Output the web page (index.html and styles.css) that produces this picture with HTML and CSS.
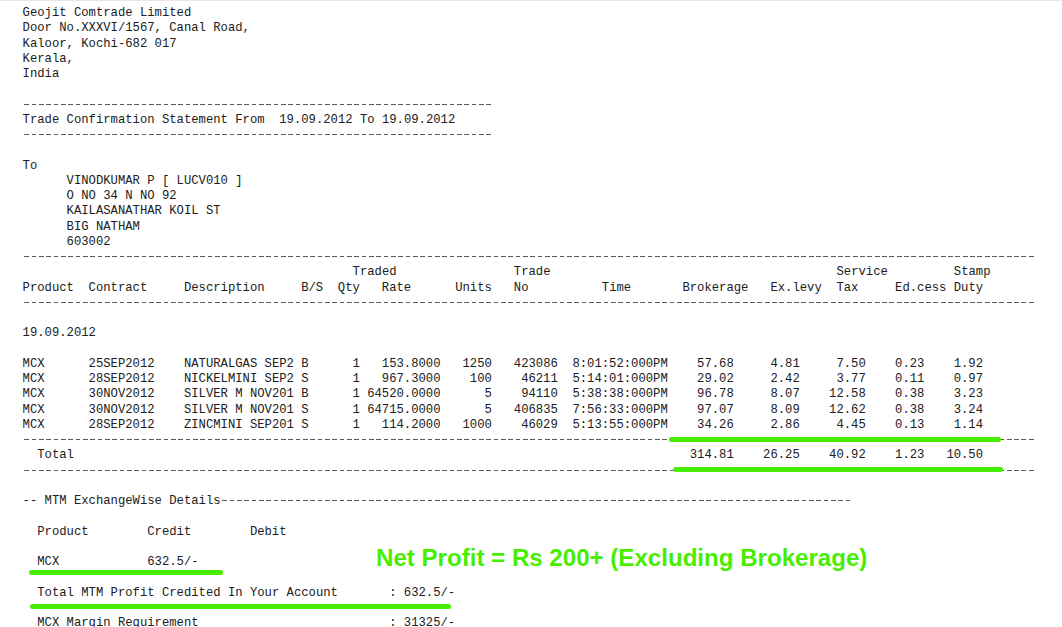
FILE: index.html
```html
<!DOCTYPE html>
<html lang="en">
<head>
<meta charset="utf-8">
<title>Trade Confirmation Statement</title>
<link rel="stylesheet" href="styles.css">
</head>
<body>
<div class="page">
  <section class="letterhead">
    <div class="ln">Geojit Comtrade Limited</div>
    <div class="ln">Door No.XXXVI/1567, Canal Road,</div>
    <div class="ln">Kaloor, Kochi-682 017</div>
    <div class="ln">Kerala,</div>
    <div class="ln">India</div>
    <div class="ln"></div>
  </section>

  <div class="rule rule-64"></div>
  <div class="ln">Trade Confirmation Statement From  19.09.2012 To 19.09.2012</div>
  <div class="rule rule-64"></div>
  <div class="ln"></div>

  <section class="recipient">
    <div class="ln">To</div>
    <div class="addr">
      <div class="ln">VINODKUMAR P [ LUCV010 ]</div>
      <div class="ln">O NO 34 N NO 92</div>
      <div class="ln">KAILASANATHAR KOIL ST</div>
      <div class="ln">BIG NATHAM</div>
      <div class="ln">603002</div>
    </div>
  </section>

  <section class="trades">
    <div class="rule rule-138"></div>
    <div class="thead-top">
      <span>Traded</span><span>Trade</span><span>Service</span><span>Stamp</span>
    </div>
    <div class="thead">
      <span>Product</span><span>Contract</span><span>Description</span><span>B/S</span><span>Qty</span><span>Rate</span><span>Units</span><span>No</span><span>Time</span><span>Brokerage</span><span>Ex.levy</span><span>Tax</span><span>Ed.cess</span><span>Duty</span>
    </div>
    <div class="rule rule-138"></div>
    <div class="ln"></div>
    <div class="ln">19.09.2012</div>
    <div class="ln"></div>

    <div class="trow">
      <span>MCX</span><span>25SEP2012</span><span>NATURALGAS SEP2</span><span>B</span><span class="r">1</span><span class="r">153.8000</span><span class="r">1250</span><span class="r">423086</span><span class="r">8:01:52:000PM</span><span class="r">57.68</span><span class="r">4.81</span><span class="r">7.50</span><span class="r">0.23</span><span class="r">1.92</span>
    </div>
    <div class="trow">
      <span>MCX</span><span>28SEP2012</span><span>NICKELMINI SEP2</span><span>S</span><span class="r">1</span><span class="r">967.3000</span><span class="r">100</span><span class="r">46211</span><span class="r">5:14:01:000PM</span><span class="r">29.02</span><span class="r">2.42</span><span class="r">3.77</span><span class="r">0.11</span><span class="r">0.97</span>
    </div>
    <div class="trow">
      <span>MCX</span><span>30NOV2012</span><span>SILVER M NOV201</span><span>B</span><span class="r">1</span><span class="r">64520.0000</span><span class="r">5</span><span class="r">94110</span><span class="r">5:38:38:000PM</span><span class="r">96.78</span><span class="r">8.07</span><span class="r">12.58</span><span class="r">0.38</span><span class="r">3.23</span>
    </div>
    <div class="trow">
      <span>MCX</span><span>30NOV2012</span><span>SILVER M NOV201</span><span>S</span><span class="r">1</span><span class="r">64715.0000</span><span class="r">5</span><span class="r">406835</span><span class="r">7:56:33:000PM</span><span class="r">97.07</span><span class="r">8.09</span><span class="r">12.62</span><span class="r">0.38</span><span class="r">3.24</span>
    </div>
    <div class="trow">
      <span>MCX</span><span>28SEP2012</span><span>ZINCMINI SEP201</span><span>S</span><span class="r">1</span><span class="r">114.2000</span><span class="r">1000</span><span class="r">46029</span><span class="r">5:13:55:000PM</span><span class="r">34.26</span><span class="r">2.86</span><span class="r">4.45</span><span class="r">0.13</span><span class="r">1.14</span>
    </div>

    <div class="rule rule-138"></div>
    <div class="trow ttotal">
      <span class="total-label">Total</span><span class="r">314.81</span><span class="r">26.25</span><span class="r">40.92</span><span class="r">1.23</span><span class="r">10.50</span>
    </div>
    <div class="rule rule-138"></div>
    <div class="ln"></div>
  </section>

  <section class="mtm">
    <div class="mtm-head"><span>-- MTM ExchangeWise Details</span><span class="rule rule-86"></span></div>
    <div class="ln"></div>
    <div class="mtm-grid"><span>Product</span><span>Credit</span><span>Debit</span></div>
    <div class="ln"></div>
    <div class="mtm-grid"><span>MCX</span><span>632.5/-</span><span></span></div>
    <div class="ln"></div>
    <div class="mtm-sum"><span>Total MTM Profit Credited In Your Account</span><span>: 632.5/-</span></div>
    <div class="ln"></div>
    <div class="mtm-sum"><span>MCX Margin Requirement</span><span>: 31325/-</span></div>
  </section>

  <div class="mark mark-total-top"></div>
  <div class="mark mark-total-bottom"></div>
  <div class="mark mark-mcx"></div>
  <div class="mark mark-mtm"></div>
  <div class="note">Net Profit = Rs 200+ (Excluding Brokerage)</div>
</div>
</body>
</html>
```

FILE: styles.css
```css
:root {
  --lh: 15.25px;
  --ink: #202020;
  --dash: #5a5a5a;
  --green: #47ee00;
}

html, body {
  margin: 0;
  background: #ffffff;
}

body {
  border-top: 1px solid #e6e6e6;
  overflow: hidden;
}

.page {
  position: relative;
  padding: 5.2px 0 0 22.6px;
  font-family: "Liberation Mono", "Courier New", monospace;
  font-size: 12.22px;
  line-height: var(--lh);
  color: var(--ink);
}

.ln {
  height: var(--lh);
  white-space: pre;
}

.addr {
  padding-left: 6ch;
}

.rule {
  display: block;
  height: var(--lh);
  background-image: repeating-linear-gradient(90deg,
    transparent 0 0.17ch,
    var(--dash) 0.17ch 0.82ch,
    transparent 0.82ch 1ch);
  background-size: 100% 1px;
  background-position: 0 6px;
  background-repeat: no-repeat;
}

.rule-64 { width: 64ch; }
.rule-138 { width: 138ch; }
.rule-86 { width: 86ch; }

.thead-top,
.thead,
.trow,
.mtm-grid,
.mtm-sum {
  display: grid;
  height: var(--lh);
  white-space: pre;
}

.thead-top {
  padding-left: 45ch;
  grid-template-columns: 22ch 44ch 16ch auto;
}

.thead {
  grid-template-columns: 9ch 13ch 16ch 5ch 6ch 10ch 8ch 12ch 11ch 12ch 9ch 8ch 8ch auto;
}

.trow {
  grid-template-columns: 9ch 13ch 16ch 1ch 7ch 11ch 7ch 9ch 15ch 9ch 9ch 9ch 8ch 8ch;
}

.trow .r {
  text-align: right;
}

.ttotal .total-label {
  grid-column: span 9;
  padding-left: 2ch;
}

.mtm-head {
  display: flex;
  height: var(--lh);
  white-space: pre;
}

.mtm-grid {
  padding-left: 2ch;
  grid-template-columns: 15ch 14ch auto;
}

.mtm-sum {
  padding-left: 2ch;
  grid-template-columns: 48ch auto;
}

/* hand-drawn green highlights laid over the statement */
.mark {
  position: absolute;
  height: 5px;
  border-radius: 3px;
  background: var(--green);
}

.mark-total-top { left: 669px; top: 435.5px; width: 332px; }
.mark-total-bottom { left: 673px; top: 466px; width: 330px; }
.mark-mcx { left: 29px; top: 568.5px; width: 194px; }
.mark-mtm { left: 30px; top: 602.5px; width: 421px; }

.note {
  position: absolute;
  left: 376px;
  top: 545px;
  font-family: "Liberation Sans", Arial, sans-serif;
  font-weight: bold;
  font-size: 24.1px;
  line-height: 1;
  color: var(--green);
  white-space: nowrap;
}
```
